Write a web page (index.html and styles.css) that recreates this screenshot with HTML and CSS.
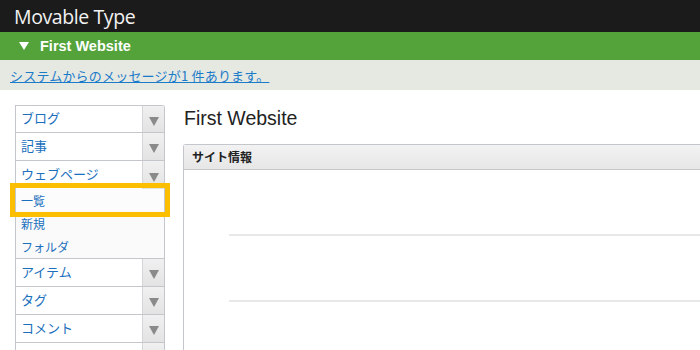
FILE: index.html
```html
<!DOCTYPE html>
<html>
<head>
<meta charset="utf-8">
<link rel="stylesheet" href="styles.css">
</head>
<body>
<div class="topbar"><span class="brand">Movable Type</span></div>
<div class="sitebar"><span class="tri"></span><span class="sitename">First Website</span></div>
<div class="msgbar"><a href="#" class="msg">システムからのメッセージが1 件あります。</a></div>
<div class="layout">
  <nav class="menu">
    <div class="item"><span class="label">ブログ</span><span class="arrow"></span></div>
    <div class="item"><span class="label">記事</span><span class="arrow"></span></div>
    <div class="item open"><span class="label">ウェブページ</span><span class="arrow"></span></div>
    <div class="sub">
      <div class="subitem current">一覧</div>
      <div class="subitem">新規</div>
      <div class="subitem">フォルダ</div>
    </div>
    <div class="item"><span class="label">アイテム</span><span class="arrow"></span></div>
    <div class="item"><span class="label">タグ</span><span class="arrow"></span></div>
    <div class="item"><span class="label">コメント</span><span class="arrow"></span></div>
    <div class="item"><span class="label"></span><span class="arrow"></span></div>
  </nav>
  <main class="content">
    <h1 class="title">First Website</h1>
    <section class="panel">
      <div class="panel-head">サイト情報</div>
      <div class="panel-body">
        <div class="rule r1"></div>
        <div class="rule r2"></div>
      </div>
    </section>
  </main>
</div>
</body>
</html>
```
FILE: styles.css
```css
html, body { margin: 0; padding: 0; background: #fff; overflow: hidden; }
body { font-family: "Liberation Sans", Arial, "Noto Sans CJK JP", sans-serif; width: 700px; height: 350px; }
.topbar { height: 32px; background: #1b1b1b; display: flex; align-items: center; padding-left: 14px; }
.brand { color: #f2f2f2; font-family: "Open Sans", "Noto Sans", sans-serif; font-size: 19.5px; letter-spacing: -0.4px; }
.sitebar { height: 28px; background: #53a33a; display: flex; align-items: center; padding-left: 19px; }
.tri { width: 0; height: 0; border-left: 5px solid transparent; border-right: 5px solid transparent; border-top: 8px solid #fff; margin-right: 11px; }
.sitename { color: #fff; font-weight: bold; font-size: 14.5px; font-family: "Liberation Sans", Arial, sans-serif; }
.msgbar { height: 30px; background: #e6e8e2; display: flex; align-items: center; padding-left: 10px; }
.msg { color: #1a7bc9; font-size: 13px; text-decoration: underline; font-family: "Noto Sans CJK JP", sans-serif; letter-spacing: 0.2px; }
.layout { display: flex; padding-top: 15px; }
.menu { margin-left: 15px; width: 150px; border-left: 1px solid #c3c7cb; border-right: 1px solid #c3c7cb; border-top: 1px solid #c3c7cb; border-top-right-radius: 3px; box-sizing: border-box; font-family: "Noto Sans CJK JP", sans-serif; }
.item { display: flex; height: 28px; border-bottom: 1px solid #c3c7cb; box-sizing: border-box; background: #fff; }
.menu .item:first-child { height: 27px; }
.item.open { border-bottom: none; }
.label { flex: 1; color: #1a70bd; font-size: 13px; padding-left: 5px; padding-bottom: 3px; display: flex; align-items: center; }
.arrow { width: 21px; border-left: 1px solid #d3d6d9; background: linear-gradient(#f0f0f0, #e3e3e3); display: flex; align-items: center; justify-content: center; }
.arrow::before { content: ""; width: 0; height: 0; border-left: 5px solid transparent; border-right: 5px solid transparent; border-top: 9px solid #8a8a8a; margin-top: 4px; }
.sub { background: #fafafa; border-bottom: 1px solid #c3c7cb; }
.subitem { height: 23px; display: flex; align-items: center; padding-left: 5px; color: #1a70bd; font-size: 12px; }
.subitem.current { height: 22px; background: #fcfcfc; outline: 5px solid #fcbf00; outline-offset: 1px; position: relative; margin-bottom: 1px; }
.content { flex: 1; padding-left: 18px; }
.title { margin: 0; height: 39px; box-sizing: border-box; font-weight: normal; font-size: 19.5px; color: #222; padding-left: 1px; padding-top: 1px; line-height: 24px; }
.panel { border-left: 1px solid #c3c7cb; border-top: 1px solid #c3c7cb; border-top-left-radius: 3px; }
.panel-head { height: 25px; background: linear-gradient(#f2f2f2, #e6e6e6); border-bottom: 1px solid #c8c8c8; display: flex; align-items: center; padding-left: 8px; padding-bottom: 1px; box-sizing: border-box; font-weight: bold; font-size: 12px; color: #222; font-family: "Noto Sans CJK JP", sans-serif; }
.panel-body { height: 200px; padding-left: 45px; padding-top: 64px; box-sizing: border-box; }
.rule { height: 2px; background: #e8e8e8; }
.r2 { margin-top: 64px; }
```
